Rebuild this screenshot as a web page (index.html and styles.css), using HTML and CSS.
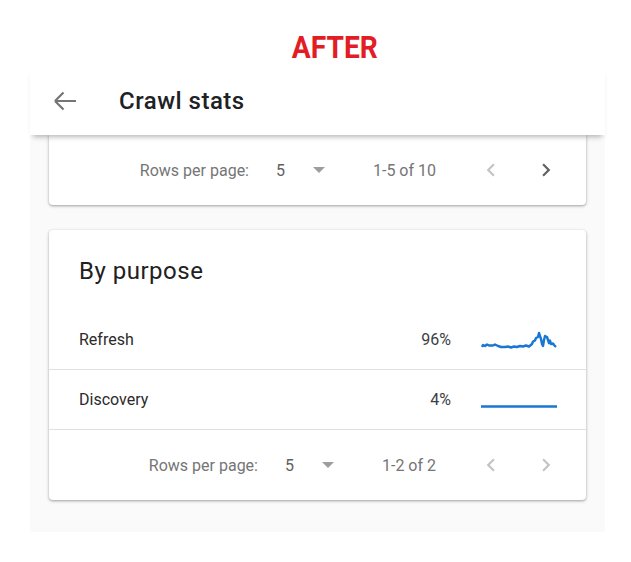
FILE: index.html
```html
<!DOCTYPE html>
<html lang="en">
<head>
<meta charset="utf-8">
<title>Crawl stats</title>
<link rel="stylesheet" href="styles.css">
</head>
<body>
<div class="label"><span class="label-text">AFTER</span></div>
<div class="frame">
  <header class="appbar">
    <svg class="back" width="24" height="20" viewBox="0 0 24 20" aria-hidden="true">
      <path d="M2 10H23M2 10L10.5 1.5M2 10L10.5 18.5" fill="none" stroke="#757575" stroke-width="2.2"/>
    </svg>
    <h1 class="appbar-title">Crawl stats</h1>
  </header>
  <main class="content">
    <section class="card card-clipped">
      <div class="pager">
        <span class="pager-label">Rows per page:</span>
        <span class="pager-size">5</span>
        <svg class="pager-drop" width="24" height="24" viewBox="0 0 24 24" aria-hidden="true"><path d="M6 9h12l-6 6z" fill="#9e9e9e"/></svg>
        <span class="pager-range">1-5 of 10</span>
        <svg class="chev" width="26" height="26" viewBox="0 0 24 24" aria-hidden="true"><path d="M15.41 7.41L14 6l-6 6 6 6 1.41-1.41L10.83 12z" fill="#c4c4c4"/></svg>
        <svg class="chev" width="26" height="26" viewBox="0 0 24 24" aria-hidden="true"><path d="M8.59 16.59L10 18l6-6-6-6-1.41 1.41L13.17 12z" fill="#616161"/></svg>
      </div>
    </section>
    <section class="card">
      <h2 class="card-title">By purpose</h2>
      <div class="row">
        <span class="row-name">Refresh</span>
        <span class="row-pct">96%</span>
        <svg class="spark" width="76" height="24" viewBox="0 0 76 24" aria-hidden="true">
          <polyline fill="none" stroke="#1976d2" stroke-width="2.4" stroke-linejoin="round" points="1,19 2,17 4,18 6,16.5 8,17.5 12,17.5 14,16.5 17,18 20,19 24,19 27,18.5 30,19.5 33,18.5 36,19 39,18 42,18.5 45,17.5 48,18.5 51,16 52,13.5 54,12.5 55,10 57,9 58,5 59,8 60,11 61,16 62,18 63,12 64,8 66,9 67,12 68,15 69,12.5 70,16 72,15.5 73,17 75,19"/>
        </svg>
      </div>
      <div class="row">
        <span class="row-name">Discovery</span>
        <span class="row-pct">4%</span>
        <svg class="spark" width="76" height="24" viewBox="0 0 76 24" aria-hidden="true">
          <line x1="0" y1="18.5" x2="76" y2="18.5" stroke="#1976d2" stroke-width="2.4"/>
        </svg>
      </div>
      <div class="pager">
        <span class="pager-label">Rows per page:</span>
        <span class="pager-size">5</span>
        <svg class="pager-drop" width="24" height="24" viewBox="0 0 24 24" aria-hidden="true"><path d="M6 9h12l-6 6z" fill="#9e9e9e"/></svg>
        <span class="pager-range">1-2 of 2</span>
        <svg class="chev" width="26" height="26" viewBox="0 0 24 24" aria-hidden="true"><path d="M15.41 7.41L14 6l-6 6 6 6 1.41-1.41L10.83 12z" fill="#c4c4c4"/></svg>
        <svg class="chev" width="26" height="26" viewBox="0 0 24 24" aria-hidden="true"><path d="M8.59 16.59L10 18l6-6-6-6-1.41 1.41L13.17 12z" fill="#c4c4c4"/></svg>
      </div>
    </section>
  </main>
</div>
</body>
</html>
```
FILE: styles.css
```css
* { box-sizing: border-box; }

html, body {
  margin: 0;
  padding: 0;
  background: #ffffff;
}

body {
  font-family: Roboto, "Noto Sans", Arial, sans-serif;
  color: #212121;
  width: 631px;
}

.label {
  height: 66px;
  display: flex;
  align-items: center;
  justify-content: center;
  padding-left: 38px;
  padding-top: 28px;
}

.label-text {
  display: inline-block;
  font-family: Roboto, sans-serif;
  font-weight: 700;
  font-size: 32px;
  line-height: 32px;
  color: #e31d25;
  transform: scaleX(0.88);
}

.frame {
  margin-left: 30px;
  width: 575px;
}

.appbar {
  position: relative;
  z-index: 2;
  height: 69px;
  background: #ffffff;
  display: flex;
  align-items: center;
  padding-left: 23px;
  box-shadow: 0 5px 5px -3px rgba(0, 0, 0, 0.28);
}

.back {
  display: block;
  flex: none;
}

.appbar-title {
  margin: 0 0 0 42px;
  font-size: 24px;
  font-weight: 500;
  line-height: 30px;
  color: #202124;
  letter-spacing: 0.5px;
}

.content {
  background: #fafafa;
  padding: 0 19px 32px;
  display: flex;
  flex-direction: column;
  gap: 25px;
}

.card {
  background: #ffffff;
  border-radius: 4px;
  box-shadow: 0 1px 2px rgba(60, 64, 67, 0.3), 0 1px 3px 1px rgba(60, 64, 67, 0.15);
}

.card-clipped {
  border-top-left-radius: 0;
  border-top-right-radius: 0;
}

.card-title {
  margin: 0;
  height: 80px;
  padding: 26px 30px 0;
  font-size: 24px;
  font-weight: 400;
  line-height: 30px;
  color: #212121;
  letter-spacing: 0.5px;
}

.row {
  height: 60px;
  display: flex;
  align-items: center;
  padding: 0 30px;
  border-bottom: 1px solid #e0e0e0;
  font-size: 16px;
  color: #2b2b2b;
}

.row-name {
  flex: 1;
}

.row-pct {
  margin-right: 30px;
  color: #3c4043;
}

.spark {
  display: block;
  flex: none;
  margin-right: -1px;
}

.pager {
  height: 70px;
  display: flex;
  align-items: center;
  justify-content: flex-end;
  padding-right: 27px;
  font-size: 16px;
  color: #757575;
}

.pager-label {
  margin-right: 27px;
}

.pager-size {
  color: #616161;
  width: 9px;
  margin-right: 22px;
}

.pager-drop {
  display: block;
  margin-right: 42px;
}

.pager-range {
  margin-right: 42px;
}

.chev {
  display: block;
}

.chev + .chev {
  margin-left: 29px;
}
```
